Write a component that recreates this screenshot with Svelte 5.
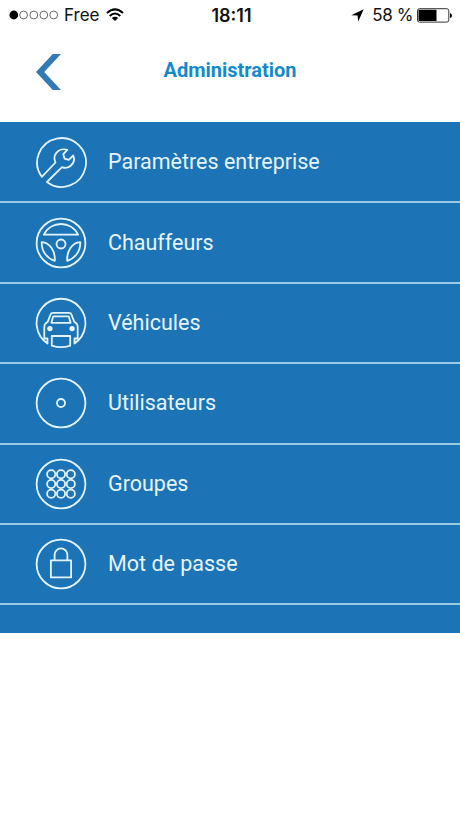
<script>
  const items = [
    { id: 'company', label: 'Paramètres entreprise' },
    { id: 'drivers', label: 'Chauffeurs' },
    { id: 'vehicles', label: 'Véhicules' },
    { id: 'users', label: 'Utilisateurs' },
    { id: 'groups', label: 'Groupes' },
    { id: 'password', label: 'Mot de passe' }
  ];

  const dots = [16.2, 26, 35.8];
</script>

<div class="screen">
  <div class="status">
    <div class="left">
      <svg class="signal" width="50" height="10" viewBox="0 0 50 10">
        <circle cx="4.8" cy="5" r="4.4" fill="#000" />
        {#each [14.6, 24.8, 34.8, 44.7] as cx}
          <circle {cx} cy="5" r="3.9" fill="none" stroke="#444" stroke-width=".8" />
        {/each}
      </svg>
      <span class="carrier">Free</span>
      <svg class="wifi" width="18" height="14" viewBox="0 0 18 14">
        <path d="M1 5.1Q9 -2.3 17 5.1M3.7 8Q9 3.1 14.3 8" fill="none" stroke="#000" stroke-width="2" />
        <path d="M5.8 9.9Q9 7.4 12.2 9.9L9 13Z" />
      </svg>
    </div>
    <span class="time">18:11</span>
    <div class="right">
      <svg class="location" width="13" height="13" viewBox="0 0 13 13">
        <path d="M12.7 0.3L7.2 12.6L6.6 6.5L0.3 6.2Z" />
      </svg>
      <span class="percent">58 %</span>
      <svg class="battery" width="36" height="15" viewBox="0 0 36 15">
        <rect x=".5" y=".7" width="31.3" height="13.4" rx="2" fill="#fff" stroke="#333" />
        <rect x="1.5" y="1.8" width="18" height="11.2" rx=".6" />
        <path d="M33 5V10Q35 9.5 35 7.5T33 5Z" />
      </svg>
    </div>
  </div>

  <header>
    <button class="back" aria-label="Retour">
      <svg width="26" height="36" viewBox="0 0 26 36">
        <path d="M16.8 0H25L8.2 18L25 36H16.8L0 18Z" />
      </svg>
    </button>
    <h1>Administration</h1>
  </header>

  <nav>
    {#each items as item (item.id)}
      <div class="row">
        <svg class="icon" width="52" height="52" viewBox="0 0 52 52">
          {#if item.id === 'company'}
            <path d="M6.8 40.8A24.4 24.4 0 1 1 11.9 46L27 31.2C30 32.5 33.5 31.8 36 29.5C39 26.8 39.7 22.8 38.3 19.5L33.8 23.9L29.5 22.6L28.3 18.2L32.3 13.9C28.5 12.5 24 13.6 21.5 16.6C19 19.6 18.9 23 20.5 26.5Z" />
          {:else if item.id === 'drivers'}
            <circle cx="26" cy="26" r="24.4" />
            <path d="M8.9 17.7C15.5 3.4 36.5 3.4 43.1 17.7Z" />
            <circle cx="26" cy="27" r="4.5" />
            <path d="M6.7 25.2C15 25.8 20.4 33.8 19.8 43.8C11.8 41.4 6.5 34.5 6.7 25.2Z" />
            <path d="M45.3 25.2C37 25.8 31.6 33.8 32.2 43.8C40.2 41.4 45.5 34.5 45.3 25.2Z" />
          {:else if item.id === 'vehicles'}
            <path d="M12.5 46.5A24.4 24.4 0 1 1 39.5 46.5V41.5H42.7V30Q42.7 27 39.3 24.8L36.5 17.7Q36 15.9 34 15.9H18Q16 15.9 15.5 17.7L12.7 24.8Q9.3 27 9.3 30V41.5H12.5Z" />
            <path d="M18.2 19.4H33.8L35.6 25.8H16.4Z" />
            <circle class="solid" cx="14.9" cy="31.6" r="1.8" />
            <circle class="solid" cx="37.1" cy="31.6" r="1.8" />
            <path d="M16.8 39H35.2V48.6Q26 51.8 16.8 48.6Z" />
          {:else if item.id === 'users'}
            <circle cx="26" cy="26" r="24.4" />
            <circle cx="26" cy="26" r="4" />
          {:else if item.id === 'groups'}
            <circle cx="26" cy="26" r="24.4" />
            {#each dots as cy}
              {#each dots as cx}
                <circle {cx} {cy} r="4.1" />
              {/each}
            {/each}
          {:else}
            <circle cx="26" cy="26" r="24.4" />
            <path d="M15.9 22.4H36.1V39.4H15.9ZM19.6 22.4V16.8A6.4 6.4 0 0 1 32.4 16.8V22.4" />
          {/if}
        </svg>
        <span class="label">{item.label}</span>
      </div>
    {/each}
  </nav>
</div>

<style>
  :global(body) {
    background: #fff;
  }

  .screen {
    height: 818px;
    background: #fff;
    font-family: Roboto, sans-serif;
    overflow: hidden;
  }

  .status {
    display: grid;
    grid-template-columns: 1fr auto 1fr;
    align-items: center;
    height: 30px;
    padding: 0 7px 0 9px;
    font-family: Inter, "Liberation Sans", sans-serif;
    font-size: 17px;
    color: #111;
  }

  .left,
  .right {
    display: flex;
    align-items: center;
  }

  .right {
    justify-content: flex-end;
  }

  .carrier {
    margin-left: 5px;
  }

  .wifi {
    margin-left: 7px;
  }

  .time {
    padding-left: 1px;
    font-size: 18px;
    font-weight: 600;
  }

  .location {
    margin-right: 8px;
  }

  .percent {
    margin-right: 4px;
    letter-spacing: -0.4px;
    white-space: nowrap;
  }

  header {
    display: grid;
    grid-template-columns: 120px 1fr 120px;
    height: 92px;
  }

  .back {
    display: flex;
    align-items: flex-start;
    padding: 24px 0 0 36px;
    border: 0;
    background: none;
  }

  .back path {
    fill: #337ab7;
  }

  h1 {
    margin: 0;
    padding-top: 28px;
    text-align: center;
    font-size: 20px;
    line-height: 24px;
    font-weight: 700;
    color: #158acb;
  }

  nav {
    padding: 1px 0 28px;
    background: #1c73b6;
  }

  .row {
    display: flex;
    align-items: center;
    box-sizing: border-box;
    height: 80.4px;
    padding-left: 35.4px;
    border-bottom: 2px solid #98cbea;
  }

  .icon {
    flex-shrink: 0;
    fill: none;
    stroke: #e2f5ff;
    stroke-width: 1.8;
    stroke-linejoin: round;
  }

  .solid {
    fill: #e2f5ff;
  }

  .label {
    margin-left: 20.6px;
    padding-bottom: 1px;
    font-size: 21.5px;
    color: #e4f4fd;
  }
</style>
